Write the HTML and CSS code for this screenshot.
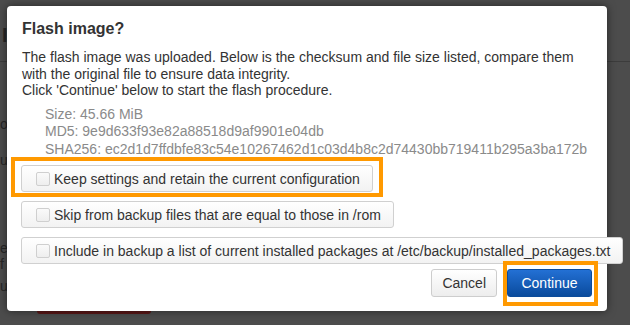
FILE: index.html
```html
<!DOCTYPE html>
<html lang="en">
<head>
  <meta charset="UTF-8" />
  <title>Flash image?</title>
  <link rel="stylesheet" href="styles.css">
</head>
<body>

<div class="page">
  <div class="page-head"><span class="page-title">I</span></div>
  <div class="page-body">
    <p class="frag frag-a">o</p>
    <p class="frag frag-b">u</p>
    <p class="frag frag-c">e<br>f</p>
    <p class="frag frag-d">ul</p>
    <span class="page-btn"></span>
  </div>
</div>

<div class="modal">
  <h4>Flash image?</h4>
  <p class="intro">
    The flash image was uploaded. Below is the checksum and file size listed, compare them
    with the original file to ensure data integrity.<br>
    Click 'Continue' below to start the flash procedure.
  </p>

  <ul class="info">
    <li>Size: 45.66 MiB</li>
    <li>MD5: 9e9d633f93e82a88518d9af9901e04db</li>
    <li>SHA256: ec2d1d7ffdbfe83c54e10267462d1c03d4b8c2d74430bb719411b295a3ba172b</li>
  </ul>

  <div class="options">
    <label class="opt highlight hl-row"><input type="checkbox" /> Keep settings and retain the current configuration</label>
    <label class="opt"><input type="checkbox" /> Skip from backup files that are equal to those in /rom</label>
    <label class="opt"><input type="checkbox" /> Include in backup a list of current installed packages at /etc/backup/installed_packages.txt</label>
  </div>

  <div class="actions">
    <button class="btn">Cancel</button>
    <button class="btn btn-primary highlight hl-btn">Continue</button>
  </div>
</div>

</body>
</html>
```

FILE: styles.css
```css
* {
  margin: 0;
  padding: 0;
  box-sizing: border-box;
}

body {
  background: #4c4c4c;
  font-family: "Liberation Sans", Arial, sans-serif;
  width: 630px;
  height: 325px;
  overflow: hidden;
  position: relative;
}

/* dimmed page behind the dialog */
.page {
  color: #262626;
  font-size: 14px;
}

.page-head {
  height: 62px;
  border-bottom: 1px solid #3c3c3c;
  padding: 24px 0 0 2px;
}

.page-title {
  font-size: 20px;
  font-weight: bold;
}

.frag {
  line-height: 16px;
}

.frag-a { margin-top: 54px; }
.frag-b { margin-top: 20px; }
.frag-c { margin-top: 72px; }
.frag-d { margin-top: 6px; }

.page-btn {
  display: block;
  width: 114px;
  height: 20px;
  margin: 0 0 0 37px;
  background: #5a1717;
  border-radius: 3px;
}

/* dialog */
.modal {
  position: absolute;
  left: 7px;
  top: 6px;
  width: 600px;
  height: 305px;
  background: #fff;
  border-radius: 4px;
  box-shadow: 0 0 8px rgba(0,0,0,0.5);
  padding: 11px 15px 0 15px;
  color: #333;
}

.modal h4 {
  font-size: 16px;
  font-weight: bold;
  line-height: 24px;
  color: #333;
}

.intro {
  margin-top: 8px;
  font-size: 14px;
  line-height: 16.6px;
}

.info {
  list-style: none;
  margin: 7px 0 0 23px;
  font-size: 14px;
  line-height: 17.5px;
  color: #8a8a8a;
}

.options {
  margin-top: 7px;
  display: flex;
  flex-direction: column;
  align-items: flex-start;
  gap: 9px;
}

.opt {
  display: inline-flex;
  align-items: center;
  gap: 4px;
  height: 27px;
  padding: 0 12px 0 14px;
  white-space: nowrap;
  font-size: 14px;
  color: #333;
  border: 1px solid #d0d0d0;
  border-radius: 3px;
  background: linear-gradient(#fff, #f2f2f2);
  margin-left: -1px;
}

.opt input {
  appearance: none;
  width: 14px;
  height: 14px;
  border: 1px solid #cfcfcf;
  border-radius: 2px;
  background: linear-gradient(#fafafa, #eee);
}

.actions {
  margin-top: 5px;
  display: flex;
  justify-content: flex-end;
  gap: 10px;
}

.btn {
  font-family: inherit;
  font-size: 14px;
  height: 28px;
  padding: 0 10px;
  color: #333;
  border: 1px solid #cdcdcd;
  border-radius: 3px;
  background: linear-gradient(#fff, #ededed);
}

.btn-primary {
  width: 85px;
  color: #fff;
  border-color: #0c4c9c;
  background: linear-gradient(#2370d4, #0a4b9d);
}

.highlight {
  position: relative;
}

.highlight::after {
  content: "";
  position: absolute;
  border: 4px solid #ff9900;
  pointer-events: none;
}

.hl-row::after {
  top: -9px;
  bottom: -6px;
  left: -11px;
  right: -11px;
}

.hl-btn::after {
  top: -9px;
  bottom: -10px;
  left: -5px;
  right: -7px;
}
```
